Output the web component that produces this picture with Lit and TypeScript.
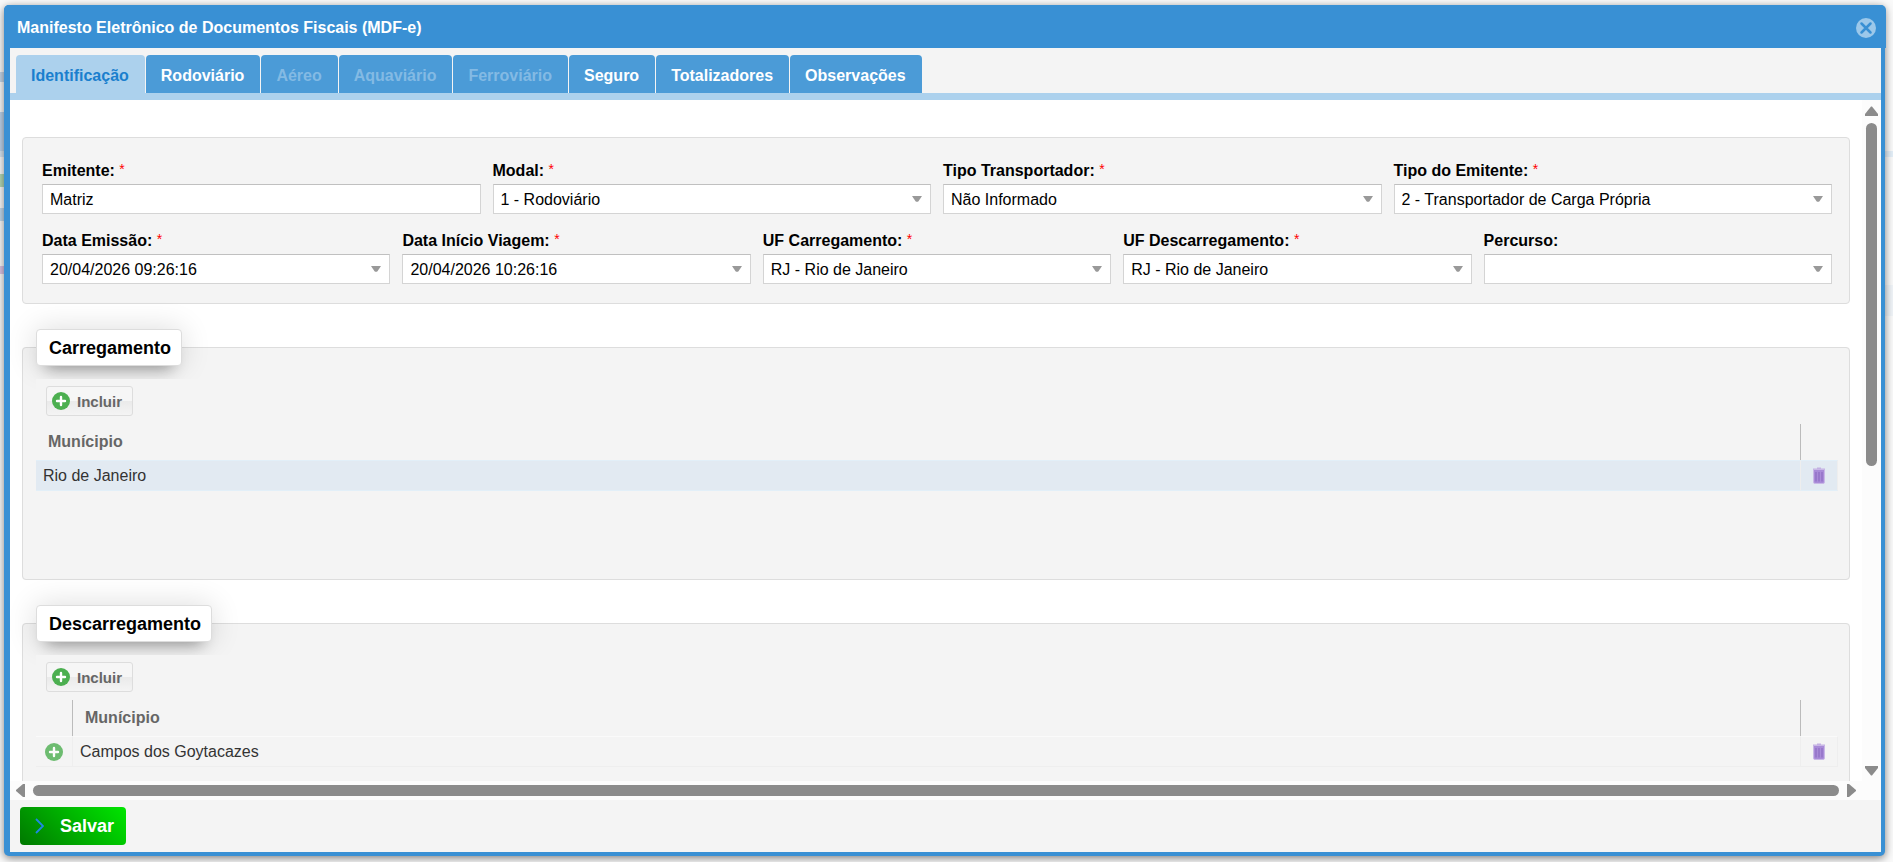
import { LitElement, html, css, svg, nothing } from "lit";
import { customElement, property, state } from "lit/decorators.js";

interface Field {
  id: string;
  label: string;
  value: string;
  required: boolean;
  kind: "text" | "select";
}

const FIELDS_TOP: Field[] = [
  { id: "emitente", label: "Emitente:", value: "Matriz", required: true, kind: "text" },
  { id: "modal", label: "Modal:", value: "1 - Rodoviário", required: true, kind: "select" },
  { id: "tipo-transportador", label: "Tipo Transportador:", value: "Não Informado", required: true, kind: "select" },
  { id: "tipo-emitente", label: "Tipo do Emitente:", value: "2 - Transportador de Carga Própria", required: true, kind: "select" },
];

const FIELDS_BOTTOM: Field[] = [
  { id: "data-emissao", label: "Data Emissão:", value: "20/04/2026 09:26:16", required: true, kind: "select" },
  { id: "data-inicio", label: "Data Início Viagem:", value: "20/04/2026 10:26:16", required: true, kind: "select" },
  { id: "uf-carregamento", label: "UF Carregamento:", value: "RJ - Rio de Janeiro", required: true, kind: "select" },
  { id: "uf-descarregamento", label: "UF Descarregamento:", value: "RJ - Rio de Janeiro", required: true, kind: "select" },
  { id: "percurso", label: "Percurso:", value: "", required: false, kind: "select" },
];

const TABS = [
  { label: "Identificação", disabled: false },
  { label: "Rodoviário", disabled: false },
  { label: "Aéreo", disabled: true },
  { label: "Aquaviário", disabled: true },
  { label: "Ferroviário", disabled: true },
  { label: "Seguro", disabled: false },
  { label: "Totalizadores", disabled: false },
  { label: "Observações", disabled: false },
];

const plusIcon = svg`<svg width="18" height="18" viewBox="0 0 18 18" aria-hidden="true">
  <circle cx="9" cy="9" r="9" fill="#4caf50"/>
  <path d="M9 5v8M5 9h8" stroke="#fff" stroke-width="2.4" stroke-linecap="round"/>
</svg>`;

const trashIcon = svg`<svg width="12" height="17" viewBox="0 0 12 17" aria-hidden="true">
  <path d="M4 0.5h4v1h4v1.5H0V1.5h4z" fill="#c3b0e2"/>
  <path d="M0.5 2.5h11v12.500a1.500 1.500 0 0 1-1.500 1.500h-8a1.500 1.500 0 0 1-1.500-1.500z" fill="#a98bd8" stroke="#c9b8e6" stroke-width="1"/>
  <path d="M3 5v9.500M6 5v9.500M9 5v9.500" stroke="#9273c6" stroke-width="1.500"/>
</svg>`;

@customElement("mdfe-field")
class MdfeField extends LitElement {
  @property({ attribute: false }) field!: Field;

  static styles = css`
    :host { display: flex; flex-direction: column; gap: 3px; min-width: 0; }
    .label { font-weight: bold; line-height: 20px; white-space: nowrap; }
    .required { color: #f00; font-weight: normal; font-size: 14px; line-height: 12px; vertical-align: 2px; }
    .control {
      box-sizing: border-box; width: 100%; height: 30px; margin: 0; padding: 0 24px 0 7px;
      border: 1px solid #d4d4d4; border-top-color: #c0c0c0; border-radius: 0;
      background: #fff; color: #000; font: inherit; outline: none;
    }
    .text { padding-top: 1px; }
    .select { appearance: none; }
    .box { display: grid; align-items: center; }
    .box > * { grid-area: 1 / 1; }
    .arrow { justify-self: end; margin-right: 9px; pointer-events: none; }
  `;

  render() {
    const f = this.field;
    return html`
      <label class="label" for=${f.id}>${f.label}${f.required ? html` <span class="required">*</span>` : nothing}</label>
      <div class="box">
        ${f.kind === "text"
          ? html`<input class="control text" id=${f.id} type="text" .value=${f.value} />`
          : html`<select class="control select" id=${f.id}><option>${f.value}</option></select>
              <svg class="arrow" width="10" height="6" viewBox="0 0 10 6" aria-hidden="true">
                <path d="M0 0h10L6.500 5.200q-1.500 1-3 0z" fill="#999"/>
              </svg>`}
      </div>
    `;
  }
}

@customElement("mdfe-city-grid")
class MdfeCityGrid extends LitElement {
  @property() legend = "";
  @property() city = "";
  @property({ type: Boolean }) expandable = false;
  @property({ type: Boolean }) selected = false;

  static styles = css`
    :host { display: block; }
    .group {
      margin: 0; padding: 13px 12px 88px 13px; min-width: 0;
      border: 1px solid #ddd; border-radius: 4px; background: #f4f4f4;
    }
    .legend {
      box-sizing: border-box; padding: 9px 10px 7px 12px; border: 1px solid #ddd; border-radius: 4px;
      background: #fff; color: #000; font-size: 18px; line-height: 19px; font-weight: bold;
      box-shadow: 0 0 30px rgba(0, 0, 0, 0.14), 0 12px 16px -10px rgba(0, 0, 0, 0.38);
    }
    .content { position: relative; margin-right: -1px; background: #f4f4f4; }
    .toolbar { display: flex; padding: 7px 10px 8px; }
    .add {
      display: flex; align-items: center; gap: 7px; height: 30px; padding: 0 10px 0 5px;
      border: 1px solid #ddd; border-radius: 3px; color: #666;
      background: linear-gradient(#f6f6f6 0 50%, #eaeaea 51%, #f4f4f4);
      font-family: inherit; font-size: 15px; font-weight: bold;
    }
    .grid { width: 100%; border-collapse: separate; border-spacing: 0; table-layout: fixed; }
    .expand { width: 37px; }
    .remove { width: 37px; }
    .head th {
      box-sizing: border-box; height: 36px; padding: 0 12px; text-align: left;
      color: #666; font-weight: bold; border-right: 1px solid #bbb;
    }
    .head th:last-child { border-right: 0; }
    .row td {
      box-sizing: border-box; height: 31px; padding: 0 7px; color: #333;
      border: 1px solid #eee; border-left: 0; border-top-color: #fafafa;
    }
    .selected td { background: #e2eaf2; border-color: #e2eff8; border-right-color: #eee; }
    .row .icon-cell { padding: 0; }
    .icon { display: flex; margin: 0 auto; padding: 0; border: 0; background: none; }
    .faded { opacity: 0.8; }
  `;

  render() {
    return html`
      <fieldset class="group">
        <legend class="legend">${this.legend}</legend>
        <div class="content">
          <div class="toolbar"><button class="add" type="button">${plusIcon}Incluir</button></div>
          <table class="grid">
            <colgroup>
              ${this.expandable ? html`<col class="expand" />` : nothing}
              <col />
              <col class="remove" />
            </colgroup>
            <thead>
              <tr class="head">
                ${this.expandable ? html`<th></th>` : nothing}
                <th scope="col">Munícipio</th>
                <th></th>
              </tr>
            </thead>
            <tbody>
              <tr class="row ${this.selected ? "selected" : ""}">
                ${this.expandable
                  ? html`<td class="icon-cell"><button class="icon faded" type="button" aria-label="Expandir">${plusIcon}</button></td>`
                  : nothing}
                <td>${this.city}</td>
                <td class="icon-cell"><button class="icon" type="button" aria-label="Excluir">${trashIcon}</button></td>
              </tr>
            </tbody>
          </table>
        </div>
      </fieldset>
    `;
  }
}

@customElement("app-root")
class AppRoot extends LitElement {
  @state() private active = 0;

  static styles = css`
    :host {
      box-sizing: border-box; display: flex; height: 100vh; padding: 5px 8px 6px 4px;
      overflow: hidden;
      /* dimmed page showing round the edges of the window */
      background:
        linear-gradient(transparent 72px, #c4d6e8 72px 82px, transparent 82px 112px, #bdd3ea 112px 151px,
          #d8e6f2 151px 157px, transparent 157px 174px, #b4d8b4 174px 187px, transparent 187px 208px,
          #c3d9ec 208px 221px, transparent 221px 266px, #dcc4e4 266px 274px, transparent 274px) left / 4px 100% no-repeat,
        linear-gradient(transparent 151px, #e4eff8 151px 157px, transparent 157px 285px, #f0f4f8 285px 316px,
          transparent 316px) right / 8px 100% no-repeat,
        #fafafa;
      font-family: "Liberation Sans", Arial, sans-serif; font-size: 16px; color: #000;
    }
    .window {
      flex: 1; min-width: 0; display: flex; flex-direction: column; border-radius: 5px;
      background: #3990d4; box-shadow: 0 2px 8px rgba(0, 0, 0, 0.5);
    }
    .titlebar {
      display: flex; align-items: center; justify-content: space-between; height: 43px;
      margin-right: -1px; padding: 0 10px 0 13px; border-radius: 5px 5px 0 0; background: #3990d4; color: #fff;
    }
    .title { margin: 0; padding-top: 2px; font-size: 16px; line-height: 20px; font-weight: bold; }
    .close { display: flex; padding: 3px 0 0; border: 0; background: none; }
    .body { flex: 1; min-height: 0; display: flex; flex-direction: column; margin: 0 4px 4px 6px; background: #f4f4f4; }
    .tabs { display: flex; gap: 1px; padding: 7px 6px 0; border-bottom: 7px solid #acd1ed; }
    .tab {
      height: 38px; padding: 3px 16px 0 15px; border: 0; border-radius: 4px 4px 0 0;
      background: #4b9bd7; color: #fff; font-family: inherit; font-size: 16px; font-weight: bold;
    }
    .tab.active { background: #acd1ed; color: #1a7fce; }
    .tab:disabled { color: #83bae4; }
    .viewport { flex: 1; min-height: 0; display: grid; grid-template: minmax(0, 1fr) 19px / minmax(0, 1fr) 19px; background: #fcfcfc; }
    .scroller { overflow: hidden; background: #fff; padding: 37px 12px 0; }
    .panel {
      display: flex; flex-direction: column; gap: 17px; padding: 23px 17px 19px 19px;
      border: 1px solid #ddd; border-radius: 4px; background: #f4f4f4;
    }
    .fields { display: grid; grid-auto-flow: column; grid-auto-columns: minmax(0, 1fr); gap: 12px; }
    .section { margin-top: 25px; }
    .bar { display: flex; align-items: center; }
    .vertical { flex-direction: column; padding: 6px 0 5px; gap: 7px; }
    .horizontal { padding: 0 6px; gap: 8px; }
    .rail { flex: 1; display: flex; min-width: 0; min-height: 0; }
    .thumb { border-radius: 6px; background: #8b8b8b; }
    .vertical .thumb { width: 11px; height: 54%; }
    .horizontal .thumb { height: 11px; width: 100%; }
    .footer { display: flex; padding: 7px 10px; }
    .save {
      display: flex; align-items: center; gap: 16px; height: 38px; padding: 0 12px 0 15px;
      border: 0; border-radius: 4px; background: linear-gradient(45deg, #007800, #00e600);
      color: #fff; font-family: inherit; font-size: 18px; font-weight: bold;
    }
  `;

  render() {
    return html`
      <section class="window" role="dialog" aria-labelledby="title">
        <header class="titlebar">
          <h1 class="title" id="title">Manifesto Eletrônico de Documentos Fiscais (MDF-e)</h1>
          <button class="close" type="button" aria-label="Fechar">
            <svg width="20" height="20" viewBox="0 0 20 20" aria-hidden="true">
              <circle cx="10" cy="10" r="10" fill="#9cc8ea"/>
              <path d="M5.500 5.500l9 9M14.500 5.500l-9 9" stroke="#3990d4" stroke-width="2.500" stroke-linecap="round"/>
            </svg>
          </button>
        </header>
        <div class="body">
          <nav class="tabs" role="tablist">
            ${TABS.map((t, i) => html`<button
              class="tab ${i === this.active ? "active" : ""}" type="button" role="tab"
              aria-selected=${i === this.active} ?disabled=${t.disabled}
              @click=${() => (this.active = i)}>${t.label}</button>`)}
          </nav>
          <div class="viewport">
            <main class="scroller">
              <div class="panel">
                <div class="fields">${FIELDS_TOP.map((f) => html`<mdfe-field .field=${f}></mdfe-field>`)}</div>
                <div class="fields">${FIELDS_BOTTOM.map((f) => html`<mdfe-field .field=${f}></mdfe-field>`)}</div>
              </div>
              <mdfe-city-grid class="section" legend="Carregamento" city="Rio de Janeiro" selected></mdfe-city-grid>
              <mdfe-city-grid class="section" legend="Descarregamento" city="Campos dos Goytacazes" expandable></mdfe-city-grid>
            </main>
            <div class="bar vertical" aria-hidden="true">
              <svg width="13" height="10" viewBox="0 0 13 10"><path d="M6 0.500h1L13 8v2H0V8z" fill="#8b8b8b"/></svg>
              <div class="rail"><div class="thumb"></div></div>
              <svg width="13" height="10" viewBox="0 0 13 10"><path d="M0 0h13v2L7 9.500H6L0 2z" fill="#8b8b8b"/></svg>
            </div>
            <div class="bar horizontal" aria-hidden="true">
              <svg width="9" height="13" viewBox="0 0 9 13"><path d="M9 0v13H7L0 7V6L7 0z" fill="#8b8b8b"/></svg>
              <div class="rail"><div class="thumb"></div></div>
              <svg width="9" height="13" viewBox="0 0 9 13"><path d="M0 0v13h2l7-6V6L2 0z" fill="#8b8b8b"/></svg>
            </div>
          </div>
          <footer class="footer">
            <button class="save" type="button">
              <svg width="9" height="16" viewBox="0 0 9 16" aria-hidden="true">
                <path d="M1 1l7 7-7 7" fill="none" stroke="#1e88e5" stroke-width="1.800"/>
              </svg>
              <span>Salvar</span>
            </button>
          </footer>
        </div>
      </section>
    `;
  }
}
